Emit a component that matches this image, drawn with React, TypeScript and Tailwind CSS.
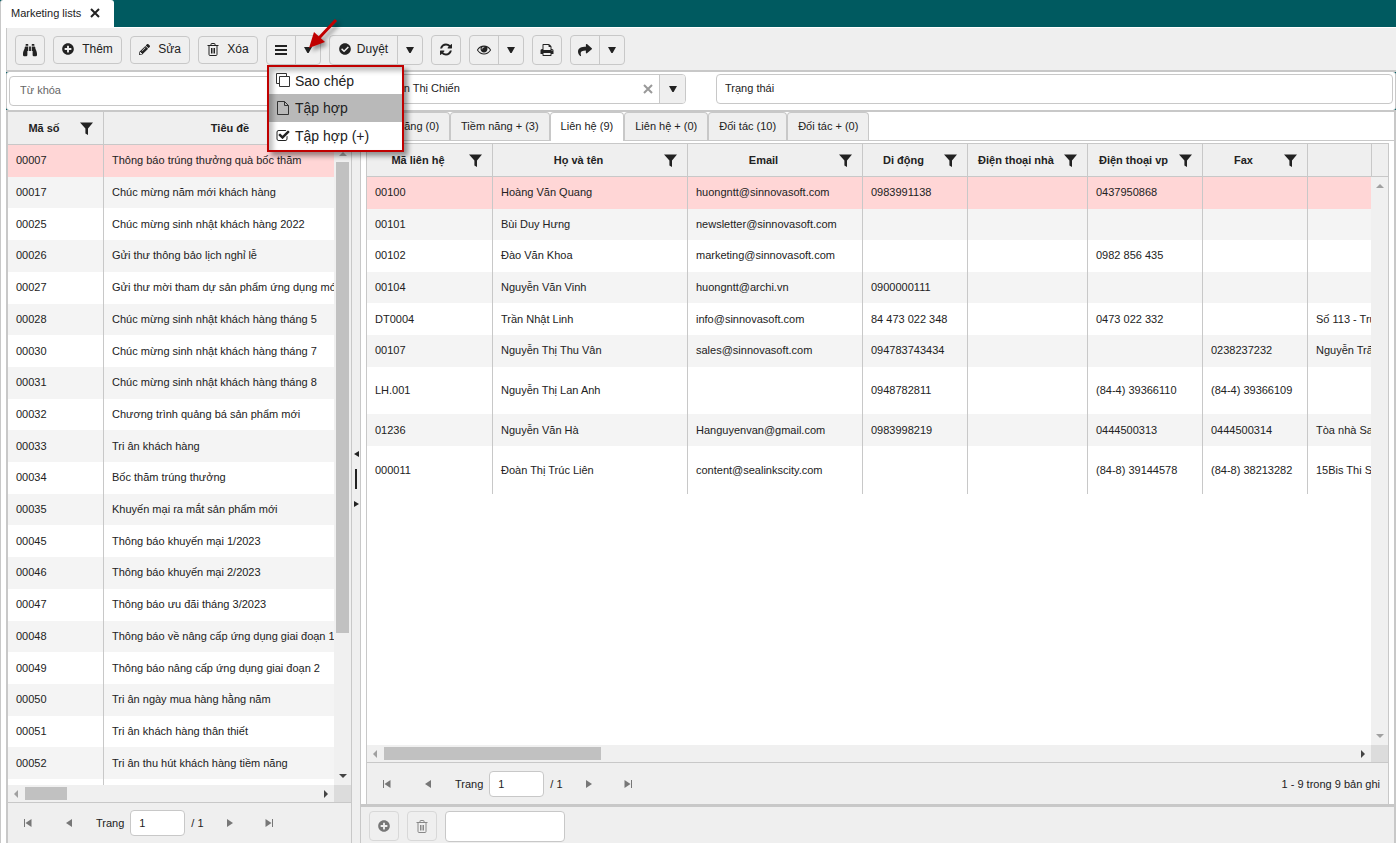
import React from "react";
import { FaBinoculars, FaPlusCircle, FaPencilAlt, FaCheckCircle, FaShare } from "react-icons/fa";

const lists: [string, string][] = [
  ["00007", "Thông báo trúng thưởng quà bốc thăm"],
  ["00017", "Chúc mừng năm mới khách hàng"],
  ["00025", "Chúc mừng sinh nhật khách hàng 2022"],
  ["00026", "Gửi thư thông bảo lịch nghỉ lễ"],
  ["00027", "Gửi thư mời tham dự sản phẩm ứng dụng mới"],
  ["00028", "Chúc mừng sinh nhật khách hàng tháng 5"],
  ["00030", "Chúc mừng sinh nhật khách hàng tháng 7"],
  ["00031", "Chúc mừng sinh nhật khách hàng tháng 8"],
  ["00032", "Chương trình quảng bá sản phẩm mới"],
  ["00033", "Tri ân khách hàng"],
  ["00034", "Bốc thăm trúng thưởng"],
  ["00035", "Khuyến mại ra mắt sản phẩm mới"],
  ["00045", "Thông báo khuyến mại 1/2023"],
  ["00046", "Thông báo khuyến mại 2/2023"],
  ["00047", "Thông báo ưu đãi tháng 3/2023"],
  ["00048", "Thông báo về nâng cấp ứng dụng giai đoạn 1"],
  ["00049", "Thông báo nâng cấp ứng dụng giai đoạn 2"],
  ["00050", "Tri ân ngày mua hàng hằng năm"],
  ["00051", "Tri ân khách hàng thân thiết"],
  ["00052", "Tri ân thu hút khách hàng tiềm năng"],
  ["", ""],
];

type Contact = { cells: string[]; tall?: boolean };
const contacts: Contact[] = [
  { cells: ["00100", "Hoàng Văn Quang", "huongntt@sinnovasoft.com", "0983991138", "", "0437950868", "", ""] },
  { cells: ["00101", "Bùi Duy Hưng", "newsletter@sinnovasoft.com", "", "", "", "", ""] },
  { cells: ["00102", "Đào Văn Khoa", "marketing@sinnovasoft.com", "", "", "0982 856 435", "", ""] },
  { cells: ["00104", "Nguyễn Văn Vinh", "huongntt@archi.vn", "0900000111", "", "", "", ""] },
  { cells: ["DT0004", "Trần Nhật Linh", "info@sinnovasoft.com", "84 473 022 348", "", "0473 022 332", "", "Số 113 - Tru"] },
  { cells: ["00107", "Nguyễn Thị Thu Vân", "sales@sinnovasoft.com", "094783743434", "", "", "0238237232", "Nguyễn Trãi"] },
  { cells: ["LH.001", "Nguyễn Thị Lan Anh", "", "0948782811", "", "(84-4) 39366110", "(84-4) 39366109", ""], tall: true },
  { cells: ["01236", "Nguyễn Văn Hà", "Hanguyenvan@gmail.com", "0983998219", "", "0444500313", "0444500314", "Tòa nhà Sa"] },
  { cells: ["000011", "Đoàn Thị Trúc Liên", "content@sealinkscity.com", "", "", "(84-8) 39144578", "(84-8) 38213282", "15Bis Thi S"], tall: true },
];

const columns = ["Mã liên hệ", "Họ và tên", "Email", "Di động", "Điện thoại nhà", "Điện thoại vp", "Fax"];
const tabs = ["Tiềm năng (0)", "Tiềm năng + (3)", "Liên hệ (9)", "Liên hệ + (0)", "Đối tác (10)", "Đối tác + (0)"];

const Down = () => (
  <svg className="h-[6px] w-2 fill-[#222]" viewBox="0 0 8 6"><path d="M0 0h8L4.600 6H3.400z" /></svg>
);

const Funnel = () => (
  <svg className="h-[13px] w-[13px] shrink-0 fill-[#222]" viewBox="0 0 13 13"><path d="M0 0.500h13L8 6.600V13L5.400 11.400V6.600z" /></svg>
);

function Arrow({ dir, light }: { dir: "up" | "down" | "left" | "right"; light?: boolean }) {
  const d = { up: "M0 6h8L4 2z", down: "M0 2h8L4 6z", left: "M6 0v8L2 4z", right: "M2 0v8l4-4z" }[dir];
  return <svg className={`h-2 w-2 ${light ? "fill-[#a0a0a0]" : "fill-[#444]"}`} viewBox="0 0 8 8"><path d={d} /></svg>;
}

const TrashIcon = () => (
  <svg className="h-[13px] w-3 fill-none stroke-current" viewBox="0 0 12 13">
    <path d="M0.500 2.500h11M4 2.500v-1.500q0-.5.5-.5h3q.5 0 .5.5v1.500M2 2.500v9q0 1 1 1h6q1 0 1-1v-9M4.500 5v5.500M6 5v5.500M7.500 5v5.500" />
  </svg>
);

const glyphs = {
  refresh: "M1511 928q0 5-1 7-64 268-268 434.500t-478 166.500q-146 0-282.500-55t-243.500-157l-129 129q-19 19-45 19t-45-19-19-45v-448q0-26 19-45t45-19h448q26 0 45 19t19 45-19 45l-137 137q71 66 161 102t187 36q134 0 250-65t186-179q11-17 53-117 8-23 30-23h192q13 0 22.500 9.500t9.500 22.500zm25-800v448q0 26-19 45t-45 19h-448q-26 0-45-19t-19-45 19-45l138-138q-148-137-349-137-134 0-250 65t-186 179q-11 17-53 117-8 23-30 23h-199q-13 0-22.500-9.500t-9.500-22.500v-7q65-268 270-434.500t480-166.500q146 0 284 55.500t245 156.500l130-129q19-19 45-19t45 19 19 45z",
  print: "M448 1536h896v-256h-896v256zm0-640h896v-384h-160q-40 0-68-28t-28-68v-160h-640v640zm1152 64q0-26-19-45t-45-19-45 19-19 45 19 45 45 19 45-19 19-45zm128 0v416q0 13-9.500 22.500t-22.500 9.500h-224v160q0 40-28 68t-68 28h-960q-40 0-68-28t-28-68v-160h-224q-13 0-22.500-9.500t-9.500-22.500v-416q0-79 56.500-135.500t135.500-56.500h64v-544q0-40 28-68t68-28h672q40 0 88 20t76 48l152 152q28 28 48 76t20 88v256h64q79 0 135.500 56.500t56.500 135.500z",
  eye: "M1664 960q-152-236-381-353 61 104 61 225 0 185-131.500 316.500t-316.500 131.500-316.500-131.500-131.500-316.500q0-121 61-225-229 117-381 353 133 205 333.500 326.500t434.500 121.500 434.500-121.500 333.500-326.500zm-720-384q0-20-14-34t-34-14q-125 0-214.500 89.500t-89.500 214.500q0 20 14 34t34 14 34-14 14-34q0-86 61-147t147-61q20 0 34-14t14-34zm848 384q0 34-20 69-140 230-376.500 368.500t-499.500 138.500-499.500-139-376.500-368q-20-35-20-69t20-69q140-229 376.500-368t499.500-139 499.500 139 376.500 368q20 35 20 69z",
  check: "M1472 930v318q0 119-84.500 203.500t-203.500 84.500h-832q-119 0-203.500-84.500t-84.500-203.500v-832q0-119 84.500-203.500t203.500-84.500h832q63 0 117 25 15 7 18 23 3 17-9 29l-49 49q-10 10-23 10-3 0-9-2-23-6-45-6h-832q-66 0-113 47t-47 113v832q0 66 47 113t113 47h832q66 0 113-47t47-113v-254q0-13 9-22l64-64q10-10 23-10 6 0 12 3 20 8 20 29zm231-489l-814 814q-24 24-57 24t-57-24l-430-430q-24-24-24-57t24-57l110-110q24-24 57-24t57 24l263 263 647-647q24-24 57-24t57 24l110 110q24 24 24 57t-24 57z",
};

const Glyph = ({ name, box = "0 0 1792 1792" }: { name: keyof typeof glyphs; box?: string }) => (
  <svg className="h-[14px] w-[14px] fill-current" viewBox={box}><path d={glyphs[name]} /></svg>
);

function PageButton({ kind, label, className = "" }: { kind: "first" | "prev" | "next" | "last"; label: string; className?: string }) {
  const d = {
    first: "M0 0h1v8H0zM7.500 0v8L1.500 4z",
    prev: "M7 0v8L1 4z",
    next: "M1 0v8l6-4z",
    last: "M7 0h1v8H7zM.5 0v8l6-4z",
  }[kind];
  return (
    <button aria-label={label} className={`flex h-6 w-6 items-center justify-center ${className}`}>
      <svg className="h-2 w-2 fill-[#777]" viewBox="0 0 8 8"><path d={d} /></svg>
    </button>
  );
}

function Pager({ id, info, height = "h-[42px]" }: { id: string; info?: string; height?: string }) {
  return (
    <div className={`flex shrink-0 items-center border-t border-[#c8c8c8] bg-[#efefef] px-2 ${height}`}>
      <PageButton kind="first" label="Trang đầu" />
      <PageButton kind="prev" label="Trang trước" className="ml-[17px]" />
      <label htmlFor={id} className="ml-[15px]">Trang</label>
      <input id={id} defaultValue="1" className="ml-[6px] h-[26px] w-[55px] rounded-[4px] border border-[#c8c8c8] bg-white px-2 outline-none" />
      <span className="ml-[6px]">/ 1</span>
      <PageButton kind="next" label="Trang sau" className="ml-[14px]" />
      <PageButton kind="last" label="Trang cuối" className="ml-[15px]" />
      {info && <span className="ml-auto">{info}</span>}
    </div>
  );
}

function HScroll({ thumb }: { thumb: string }) {
  return (
    <div className="flex h-[17px] shrink-0 bg-[#f0f0f0]">
      <div className="flex flex-1 items-center pl-1 pr-1">
        <Arrow dir="left" light />
        <div className={`ml-[5px] h-[13px] bg-[#c1c1c1] ${thumb}`} />
        <div className="flex-1" />
        <Arrow dir="right" />
      </div>
      <div className="w-[17px] bg-[#dcdcdc]" />
    </div>
  );
}

const btn = "flex h-[30px] shrink-0 items-center justify-center rounded-[4px] border border-[#c8c8c8] bg-[#efefef] text-[12px]";
const textBtn = "ml-2 flex h-7 shrink-0 items-center justify-center gap-2 rounded-[4px] border border-[#c8c8c8] bg-[#efefef] pb-[2px] text-[12px]";
const split = "ml-2 flex h-[30px] shrink-0 items-stretch rounded-[4px] border border-[#c8c8c8] bg-[#efefef] text-[12px]";
const caret = "flex w-[25px] items-center justify-center border-l border-[#c8c8c8]";

function Th({ children }: { children: React.ReactNode }) {
  return (
    <th className="h-[33px] border-b border-r border-[#c8c8c8] p-0 font-bold">
      <div className="flex items-center pr-[10px]">
        <span className="flex-1 whitespace-nowrap text-center">{children}</span>
        <Funnel />
      </div>
    </th>
  );
}

const rowColor = (i: number) => (i === 0 ? "bg-[#ffd6d6]" : i % 2 ? "bg-[#f4f4f4]" : "bg-white");

export default function App() {
  return (
    <div className="flex h-screen flex-col overflow-hidden bg-white font-['Liberation_Sans',Arial,sans-serif] text-[11px] leading-4 text-[#222]">
      <header className="flex h-[27px] shrink-0 bg-[#005a60]">
        <div className="flex w-[114px] items-center rounded-t-[3px] border-l border-[#c8c8c8] bg-white pb-px pl-[10px]">
          <span>Marketing lists</span>
          <button aria-label="Đóng" className="ml-[9px]">
            <svg className="h-[10px] w-[10px] stroke-[#222] stroke-2" viewBox="0 0 10 10"><path d="M1 1l8 8M9 1L1 9" /></svg>
          </button>
        </div>
      </header>

      <main className="flex min-h-0 flex-1 flex-col border-l border-[#c8c8c8] pl-[5px] pt-px">
        <div className="relative z-10 flex h-[44px] shrink-0 items-center border-b-2 border-l border-[#c8c8c8] bg-[#efefef] pl-2 pt-[2px]">
          <button aria-label="Tìm kiếm" className={`${btn} w-[30px]`}><FaBinoculars size={14} /></button>
          <button className={`${textBtn} w-[69px]`}><FaPlusCircle size={12} />Thêm</button>
          <button className={`${textBtn} w-[60px]`}><FaPencilAlt size={11} />Sửa</button>
          <button className={`${textBtn} w-[60px]`}><TrashIcon />Xóa</button>
          <div className={`${split} relative`}>
            <button aria-label="Menu" className="flex w-7 items-center justify-center">
              <svg className="h-[10px] w-3 fill-[#222]" viewBox="0 0 12 10"><path d="M0 0h12v2H0zM0 4h12v2H0zM0 8h12v2H0z" /></svg>
            </button>
            <button aria-label="Mở menu" className={caret}><Down /></button>
            <div role="menu" className="absolute left-0 top-[29px] w-[137px] border-[2px] border-[#c00000] bg-white text-[14px] shadow-[4px_4px_5px_rgba(0,0,0,0.4)]">
              <button role="menuitem" className="flex h-[27px] w-full items-center gap-1 pl-[7px]">
                <svg className="h-[15px] w-[15px] fill-none stroke-[#333]" viewBox="0 0 15 15"><path d="M3.500 3.500h10v10h-10zM3 10.500H.5v-10h10V3" /></svg>
                Sao chép
              </button>
              <button role="menuitem" className="flex h-7 w-full items-center gap-1 bg-[#b9b9b9] pl-[7px]">
                <svg className="h-[15px] w-[15px] fill-none stroke-[#333]" viewBox="0 0 15 15"><path d="M1.500 .5h7l4 4v9h-11zM8.500 .5v4h4" /></svg>
                Tập hợp
              </button>
              <button role="menuitem" className="flex h-7 w-full items-center gap-[5px] pl-[7px]">
                <Glyph name="check" />
                Tập hợp (+)
              </button>
              <div className="pointer-events-none absolute inset-0 shadow-[inset_4px_4px_5px_rgba(0,0,0,0.25)]" />
            </div>
            <svg className="pointer-events-none absolute -top-[18px] left-[38px] h-[36px] w-[40px] drop-shadow-[3px_3px_2px_rgba(0,0,0,0.4)]" viewBox="0 0 40 36">
              <path d="M31 2L14 20" className="fill-none stroke-[#c00000] stroke-[3px]" />
              <path d="M4 30L9 14l11 10z" className="fill-[#c00000]" />
            </svg>
          </div>
          <div className={split}>
            <button className="flex w-[67px] items-center justify-center gap-[6px] pb-[2px]"><FaCheckCircle size={12} />Duyệt</button>
            <button aria-label="Mở duyệt" className={caret}><Down /></button>
          </div>
          <button aria-label="Làm mới" className={`${btn} ml-2 w-[30px]`}><Glyph name="refresh" box="-128 -64 1792 1792" /></button>
          <div className={split}>
            <button aria-label="Xem" className="flex w-7 items-center justify-center"><Glyph name="eye" box="0 64 1792 1792" /></button>
            <button aria-label="Mở xem" className={caret}><Down /></button>
          </div>
          <button aria-label="In" className={`${btn} ml-2 w-[30px]`}><Glyph name="print" /></button>
          <div className={split}>
            <button aria-label="Chia sẻ" className="flex w-7 items-center justify-center"><FaShare size={14} /></button>
            <button aria-label="Mở chia sẻ" className={caret}><Down /></button>
          </div>
        </div>

        <div className="h-[38px] shrink-0 bg-[#005a60]">
          <div className="flex h-full items-start rounded-[3px] border-x border-[#c8c8c8] bg-white px-[2px] pt-[2px]">
            <input aria-label="Từ khóa" placeholder="Từ khóa" className="mt-[2px] h-[30px] w-[327px] rounded-[4px] border border-[#c8c8c8] px-[10px] pb-[2px] outline-none placeholder:text-[#666]" />
            <div className="ml-[30px] flex h-[30px] w-[320px] overflow-hidden rounded-[4px] border border-[#c8c8c8]">
              <input aria-label="Người phụ trách" defaultValue="Nguyễn Thị Chiến" className="min-w-0 flex-1 pb-[3px] pl-[5px] outline-none" />
              <button aria-label="Xóa chọn" className="flex w-[22px] items-center justify-center">
                <svg className="h-[10px] w-[10px] stroke-[#999] stroke-2" viewBox="0 0 10 10"><path d="M1 1l8 8M9 1L1 9" /></svg>
              </button>
              <button aria-label="Chọn" className="flex w-[26px] items-center justify-center border-l border-[#c8c8c8] bg-[#efefef]"><Down /></button>
            </div>
            <input aria-label="Trạng thái" defaultValue="Trạng thái" className="ml-[30px] h-[30px] min-w-0 flex-1 rounded-[4px] border border-[#c8c8c8] px-2 pb-[3px] outline-none" />
          </div>
        </div>

        <div className="flex min-h-0 flex-1 border-t-2 border-[#c8c8c8]">
          <section className="flex w-[346px] shrink-0 flex-col border-l-2 border-r border-[#c8c8c8] bg-[#efefef]">
            <div className="h-[33px] shrink-0 overflow-hidden border-b border-[#c8c8c8]">
              <table className="w-[372px] table-fixed border-separate border-spacing-0">
                <colgroup><col className="w-[96px]" /><col className="w-[276px]" /></colgroup>
                <thead><tr><Th>Mã số</Th><Th>Tiêu đề</Th></tr></thead>
              </table>
            </div>
            <div className="flex min-h-0 flex-1">
              <div className="min-w-0 flex-1 overflow-hidden bg-white">
                <table className="h-[666px] w-[372px] table-fixed border-separate border-spacing-0">
                  <colgroup><col className="w-[96px]" /><col className="w-[276px]" /></colgroup>
                  <tbody>
                    {lists.map(([code, title], i) => (
                      <tr key={i} className={`h-[31px] ${rowColor(i)}`}>
                        <td className="border-r border-[#c8c8c8] px-2 pb-px pt-0">{code}</td>
                        <td className="whitespace-nowrap px-2 pb-px pt-0">{title}</td>
                      </tr>
                    ))}
                  </tbody>
                </table>
              </div>
              <div className="flex w-[17px] flex-col items-center bg-[#f0f0f0] py-[5px]">
                <Arrow dir="up" light />
                <div className="mt-1 h-[471px] w-[13px] bg-[#c1c1c1]" />
                <div className="flex-1" />
                <Arrow dir="down" />
              </div>
            </div>
            <HScroll thumb="w-[42px]" />
            <Pager id="list-page" height="h-[41px]" />
          </section>

          <div className="flex w-2 shrink-0 flex-col items-center justify-center gap-3 bg-[#efefef] pt-[3px]">
            <svg className="h-[6px] w-[5px] fill-[#222]" viewBox="0 0 5 6"><path d="M5 0v6L0 3z" /></svg>
            <div className="h-5 w-[2px] bg-[#222]" />
            <svg className="h-[6px] w-[5px] fill-[#222]" viewBox="0 0 5 6"><path d="M0 0v6l5-3z" /></svg>
          </div>

          <section className="flex min-w-0 flex-1 flex-col border-l border-r-2 border-[#c8c8c8]">
            <div role="tablist" className="-ml-px flex h-[29px] shrink-0 items-end border-b border-[#c8c8c8]">
              {tabs.map((t, i) => (
                <button
                  key={t}
                  role="tab"
                  aria-selected={i === 2}
                  className={`rounded-t-[4px] border-x border-t border-[#c8c8c8] px-[10px] ${i === 2 ? "-mb-px h-[29px] bg-white pb-[3px]" : "h-7 bg-[#efefef] pb-[2px]"}`}
                >
                  {t}
                </button>
              ))}
            </div>
            <div className="ml-[5px] mr-[5px] mt-[2px] flex min-h-0 flex-1 flex-col border-x border-t border-[#c8c8c8]">
              <div className="flex min-h-0 flex-1">
                <div className="min-w-0 flex-1 overflow-hidden">
                  <table className="h-[350px] w-full table-fixed border-separate border-spacing-0">
                    <colgroup>
                      <col className="w-[126px]" /><col className="w-[195px]" /><col className="w-[175px]" /><col className="w-[105px]" />
                      <col className="w-[120px]" /><col className="w-[115px]" /><col className="w-[105px]" /><col />
                    </colgroup>
                    <thead className="bg-[#efefef]">
                      <tr>
                        {columns.map((c) => <Th key={c}>{c}</Th>)}
                        <th className="border-b border-[#c8c8c8] p-0" />
                      </tr>
                    </thead>
                    <tbody>
                      {contacts.map(({ cells, tall }, i) => (
                        <tr key={i} className={`${tall ? "h-[47px]" : "h-[31px]"} ${rowColor(i)}`}>
                          {cells.map((c, j) => (
                            <td key={j} className={`overflow-hidden whitespace-nowrap pb-px pl-2 pr-0 pt-0 ${j < 7 ? "border-r border-[#c8c8c8]" : ""}`}>{c}</td>
                          ))}
                        </tr>
                      ))}
                    </tbody>
                  </table>
                </div>
                <div className="flex w-[17px] flex-col bg-[#f0f0f0]">
                  <div className="h-[33px] border-b border-l border-[#c8c8c8] bg-[#efefef]" />
                  <div className="flex flex-1 flex-col items-center justify-between py-[5px]">
                    <Arrow dir="up" light />
                    <Arrow dir="down" light />
                  </div>
                </div>
              </div>
              <HScroll thumb="w-[217px]" />
              <Pager id="contact-page" info="1 - 9 trong 9 bản ghi" />
            </div>
            <div className="flex h-[39px] shrink-0 items-start gap-2 border-t-[3px] border-[#c8c8c8] bg-[#efefef] pl-2 pt-1">
              <button aria-label="Thêm dòng" className="flex h-[30px] w-[30px] items-center justify-center rounded-[4px] border border-[#d8d8d8] text-[#777]"><FaPlusCircle size={12} /></button>
              <button aria-label="Xóa dòng" className="flex h-[30px] w-[30px] items-center justify-center rounded-[4px] border border-[#d8d8d8] text-[#888]"><TrashIcon /></button>
              <input aria-label="Tìm nhanh" className="h-[31px] w-[120px] rounded-[4px] border border-[#c8c8c8] bg-white px-2 outline-none" />
            </div>
          </section>
        </div>
      </main>
    </div>
  );
}
